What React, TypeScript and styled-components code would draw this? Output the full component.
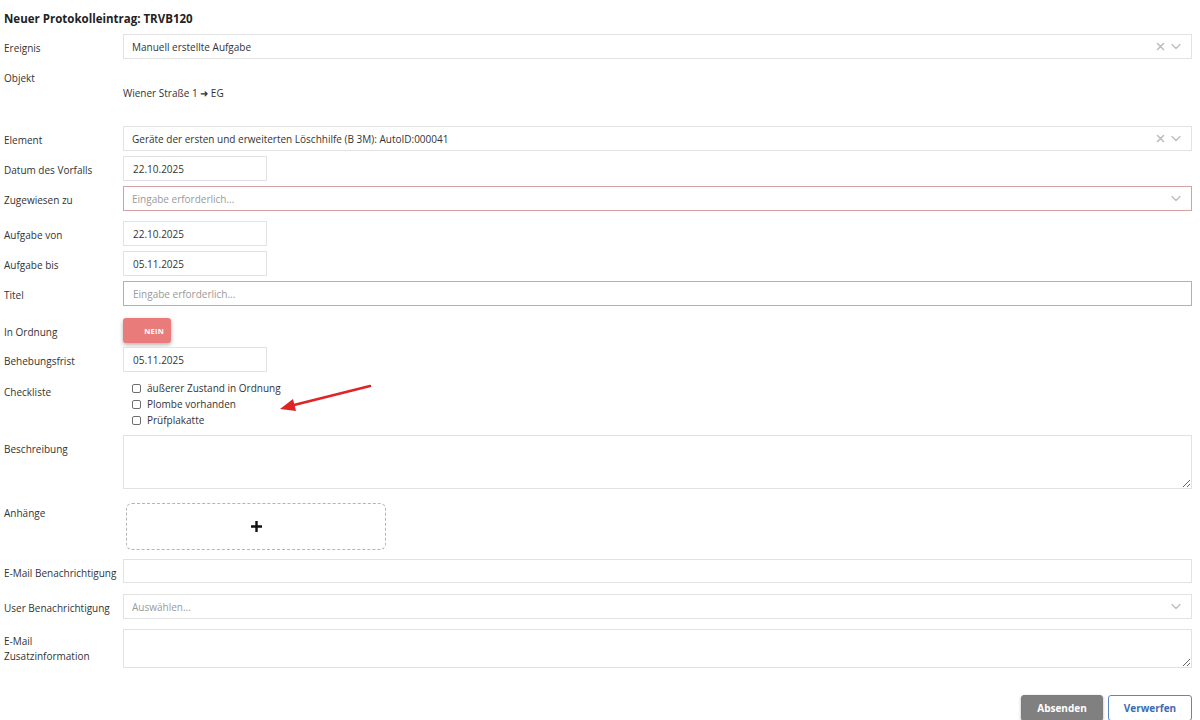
import React from "react";
import styled, { createGlobalStyle } from "styled-components";

const GlobalStyle = createGlobalStyle`
  html, body {
    margin: 0;
    padding: 0;
    background: #ffffff;
  }
  body {
    font-family: "Open Sans", "Liberation Sans", sans-serif;
    font-size: 10px;
    color: #333333;
  }
  * {
    box-sizing: border-box;
  }
`;

const Page = styled.div`
  position: relative;
  padding: 11px 8px 0 4px;
  width: 1200px;
`;

const Title = styled.h1`
  margin: 0;
  font-size: 11.5px;
  line-height: 16px;
  font-weight: 700;
  color: #222222;
`;

const Row = styled.div<{ $mt: number; $minH?: number }>`
  display: flex;
  align-items: flex-start;
  margin-top: ${(p) => p.$mt}px;
  min-height: ${(p) => (p.$minH ? `${p.$minH}px` : "auto")};
`;

const Label = styled.div<{ $pt?: number }>`
  flex: none;
  width: 119px;
  padding-top: ${(p) => (p.$pt ?? 7)}px;
  line-height: 15px;
  color: #333333;
`;

const Field = styled.div`
  flex: 1;
  min-width: 0;
`;

const boxBorder = (invalid?: boolean) => (invalid ? "#d3a3a3" : "#e2e2e2");

const Select = styled.div<{ $invalid?: boolean }>`
  display: flex;
  align-items: center;
  height: 25px;
  padding: 0 10px 0 8px;
  border: 1px solid ${(p) => boxBorder(p.$invalid)};
  background: #ffffff;
`;

const SelectValue = styled.span<{ $placeholder?: boolean }>`
  flex: 1;
  color: ${(p) => (p.$placeholder ? "#9a9a9a" : "#333333")};
  white-space: nowrap;
  overflow: hidden;
`;

const SelectIcons = styled.span`
  display: flex;
  align-items: center;
  gap: 6px;
  color: #bdbdbd;
`;

const TextInput = styled.input<{ $invalid?: boolean; $w?: number; $h?: number }>`
  display: block;
  width: ${(p) => (p.$w ? `${p.$w}px` : "100%")};
  height: ${(p) => p.$h ?? 25}px;
  padding: 0 9px;
  border: 1px solid ${(p) => boxBorder(p.$invalid)};
  background: #ffffff;
  font: inherit;
  color: #333333;
  outline: none;
  &::placeholder {
    color: #9a9a9a;
  }
`;

const TextArea = styled.textarea<{ $h: number }>`
  display: block;
  width: 100%;
  height: ${(p) => p.$h}px;
  border: 1px solid #e2e2e2;
  font: inherit;
  resize: vertical;
  outline: none;
  margin: 0;
`;

const ObjectValue = styled.div`
  padding-top: 22px;
  line-height: 15px;
  color: #333333;
`;

const Toggle = styled.div`
  width: 48px;
  height: 25px;
  border-radius: 3px;
  background: #e97b7b;
  box-shadow: 0 2px 4px rgba(0, 0, 0, 0.3);
  display: flex;
  align-items: center;
  justify-content: flex-end;
  padding-right: 7px;
  color: #ffffff;
  font-size: 7.5px;
  font-weight: 700;
  letter-spacing: 0.2px;
`;

const CheckList = styled.div`
  padding: 6px 0 0 9px;
  display: flex;
  flex-direction: column;
`;

const CheckItem = styled.label`
  display: flex;
  align-items: center;
  gap: 6px;
  height: 16px;
  line-height: 16px;
`;

const CheckBox = styled.span`
  width: 9px;
  height: 9px;
  border: 1px solid #6f6f6f;
  border-radius: 2px;
  background: #ffffff;
`;

const DropZone = styled.div`
  margin-left: 3px;
  width: 260px;
  height: 47px;
  border: 1px dashed #b5b5b5;
  border-radius: 6px;
  display: flex;
  align-items: center;
  justify-content: center;
`;

const Actions = styled.div`
  display: flex;
  justify-content: flex-end;
  gap: 5px;
  margin-top: 27px;
`;

const Button = styled.button<{ $primary?: boolean; $w: number }>`
  width: ${(p) => p.$w}px;
  height: 26px;
  border-radius: 3px;
  font-family: inherit;
  font-size: 10px;
  font-weight: 700;
  cursor: pointer;
  border: 1px solid ${(p) => (p.$primary ? "#7d7d7d" : "#5c86c9")};
  background: ${(p) => (p.$primary ? "#808080" : "#ffffff")};
  color: ${(p) => (p.$primary ? "#ffffff" : "#3c6cb4")};
  box-shadow: ${(p) => (p.$primary ? "0 1px 3px rgba(0,0,0,0.3)" : "none")};
`;

const ArrowOverlay = styled.svg`
  position: absolute;
  left: 0;
  top: 0;
  pointer-events: none;
`;

const ClearIcon = () => (
  <svg width="9" height="9" viewBox="0 0 9 9">
    <path d="M1.5 1.5 L7.5 7.5 M7.5 1.5 L1.5 7.5" stroke="currentColor" strokeWidth="1.6" strokeLinecap="round" />
  </svg>
);

const ChevronIcon = () => (
  <svg width="10" height="7" viewBox="0 0 10 7">
    <path d="M1 1.5 L5 5.5 L9 1.5" stroke="currentColor" strokeWidth="1.3" fill="none" strokeLinecap="round" strokeLinejoin="round" />
  </svg>
);

const PlusIcon = () => (
  <svg width="13" height="13" viewBox="0 0 13 13">
    <path d="M6.5 1 V12 M1 6.5 H12" stroke="#111111" strokeWidth="2.4" />
  </svg>
);

const checklist = ["äußerer Zustand in Ordnung", "Plombe vorhanden", "Prüfplakatte"];

export default function App() {
  return (
    <>
      <GlobalStyle />
      <Page>
        <Title>Neuer Protokolleintrag: TRVB120</Title>

        <Row $mt={7}>
          <Label>Ereignis</Label>
          <Field>
            <Select>
              <SelectValue>Manuell erstellte Aufgabe</SelectValue>
              <SelectIcons>
                <ClearIcon />
                <ChevronIcon />
              </SelectIcons>
            </Select>
          </Field>
        </Row>

        <Row $mt={5} $minH={57}>
          <Label>Objekt</Label>
          <Field>
            <ObjectValue>Wiener Straße 1 ➜ EG</ObjectValue>
          </Field>
        </Row>

        <Row $mt={5}>
          <Label>Element</Label>
          <Field>
            <Select>
              <SelectValue>Geräte der ersten und erweiterten Löschhilfe (B 3M): AutoID:000041</SelectValue>
              <SelectIcons>
                <ClearIcon />
                <ChevronIcon />
              </SelectIcons>
            </Select>
          </Field>
        </Row>

        <Row $mt={5}>
          <Label>Datum des Vorfalls</Label>
          <Field>
            <TextInput $w={144} defaultValue="22.10.2025" />
          </Field>
        </Row>

        <Row $mt={5}>
          <Label>Zugewiesen zu</Label>
          <Field>
            <Select $invalid>
              <SelectValue $placeholder>Eingabe erforderlich...</SelectValue>
              <SelectIcons>
                <ChevronIcon />
              </SelectIcons>
            </Select>
          </Field>
        </Row>

        <Row $mt={10}>
          <Label>Aufgabe von</Label>
          <Field>
            <TextInput $w={144} defaultValue="22.10.2025" />
          </Field>
        </Row>

        <Row $mt={5}>
          <Label>Aufgabe bis</Label>
          <Field>
            <TextInput $w={144} defaultValue="05.11.2025" />
          </Field>
        </Row>

        <Row $mt={5}>
          <Label>Titel</Label>
          <Field>
            <TextInput $invalid placeholder="Eingabe erforderlich..." />
          </Field>
        </Row>

        <Row $mt={12}>
          <Label>In Ordnung</Label>
          <Field>
            <Toggle>NEIN</Toggle>
          </Field>
        </Row>

        <Row $mt={4}>
          <Label>Behebungsfrist</Label>
          <Field>
            <TextInput $w={144} defaultValue="05.11.2025" />
          </Field>
        </Row>

        <Row $mt={2}>
          <Label $pt={11}>Checkliste</Label>
          <Field>
            <CheckList>
              {checklist.map((item) => (
                <CheckItem key={item}>
                  <CheckBox />
                  {item}
                </CheckItem>
              ))}
            </CheckList>
          </Field>
        </Row>

        <Row $mt={7}>
          <Label>Beschreibung</Label>
          <Field>
            <TextArea $h={54} />
          </Field>
        </Row>

        <Row $mt={14}>
          <Label $pt={3}>Anhänge</Label>
          <Field>
            <DropZone>
              <PlusIcon />
            </DropZone>
          </Field>
        </Row>

        <Row $mt={9}>
          <Label>E-Mail Benachrichtigung</Label>
          <Field>
            <TextInput $h={24} />
          </Field>
        </Row>

        <Row $mt={11}>
          <Label>User Benachrichtigung</Label>
          <Field>
            <Select>
              <SelectValue $placeholder>Auswählen...</SelectValue>
              <SelectIcons>
                <ChevronIcon />
              </SelectIcons>
            </Select>
          </Field>
        </Row>

        <Row $mt={10}>
          <Label $pt={5}>
            E-Mail
            <br />
            Zusatzinformation
          </Label>
          <Field>
            <TextArea $h={39} />
          </Field>
        </Row>

        <Actions>
          <Button $primary $w={82}>Absenden</Button>
          <Button $w={84}>Verwerfen</Button>
        </Actions>

        <ArrowOverlay width="1200" height="720" viewBox="0 0 1200 720">
          <line x1="370" y1="386" x2="292" y2="405.5" stroke="#e02424" strokeWidth="2.6" strokeLinecap="round" />
          <polygon points="280,409 293,399 296,411" fill="#e02424" />
        </ArrowOverlay>
      </Page>
    </>
  );
}
